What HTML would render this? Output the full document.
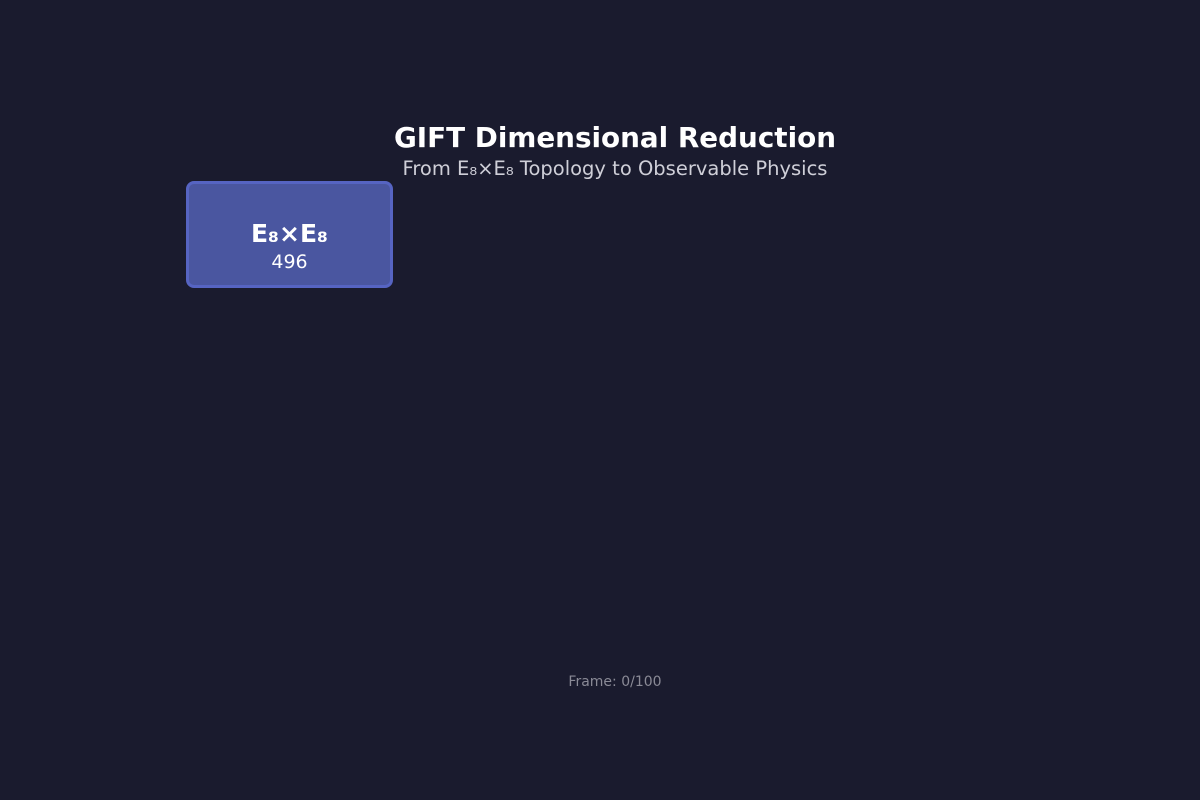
<!DOCTYPE html>
<html><head><style>
body{margin:0;width:1200px;height:800px;background:#1a1b2e;font-family:"DejaVu Sans","Liberation Sans",sans-serif;position:relative;overflow:hidden}
.t{position:absolute;left:0;width:1230px;text-align:center}
</style></head><body>
<div class="t" style="top:121px;font-size:27.8px;font-weight:bold;color:#fff;line-height:34px">GIFT Dimensional Reduction</div>
<div class="t" style="top:158px;font-size:19.5px;color:#cfcfd8;line-height:22px">From E₈×E₈ Topology to Observable Physics</div>
<div style="position:absolute;left:186px;top:181px;width:201px;height:101px;background:#4a56a0;border:3px solid #5664c2;border-radius:8px"></div>
<div style="position:absolute;left:186px;top:219px;width:207px;text-align:center;color:#fff;font-size:25px;font-weight:bold;line-height:30px">E₈×E₈</div>
<div style="position:absolute;left:186px;top:251px;width:207px;text-align:center;color:#fff;font-size:19px;line-height:22px">496</div>
<div class="t" style="top:674px;font-size:14px;color:#8a8a96;line-height:17px">Frame: 0/100</div>
</body></html>
